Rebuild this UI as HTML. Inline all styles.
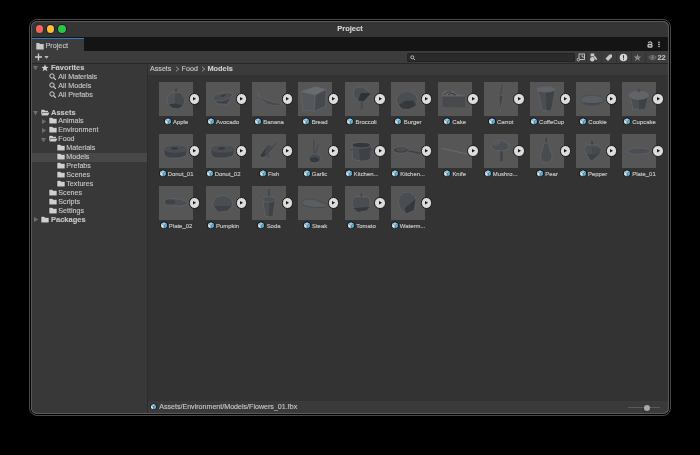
<!DOCTYPE html><html><head><meta charset="utf-8"><style>
*{margin:0;padding:0;box-sizing:border-box}
html,body{-webkit-font-smoothing:antialiased;width:700px;height:455px;background:#000;overflow:hidden;font-family:"Liberation Sans",sans-serif}
.a{position:absolute}
#outer{left:29px;top:19px;width:642px;height:397px;border:1px solid #4a4a4a;border-radius:8px}
#win{left:31px;top:21px;width:638px;height:393px;background:#383838;border-radius:6px;overflow:hidden;will-change:transform}
#hl{left:31px;top:21px;width:638px;height:393px;border-radius:6px;box-shadow:inset 0 0 0 1px #5a5a5a}
.t{white-space:nowrap;color:#c8c8c8;font-size:7.1px;line-height:9px;-webkit-text-stroke:0.12px currentColor}
.b{font-weight:bold}
.th{width:34px;height:34px;background:#565656}
.pb{border-radius:50%;background:#dcdcdc;border:1.2px solid #141414}
.lb{font-size:5.95px;line-height:8px;color:#c8c8c8;-webkit-text-stroke:0.15px #c8c8c8;white-space:nowrap;text-align:center}
svg{position:absolute;overflow:visible}
</style></head><body>
<div class="a" id="outer"></div>
<div class="a" id="win">
<div class="a" style="left:0.00px;top:0.00px;width:638.00px;height:16.00px;background:#353535"></div>
<div class="a" style="left:0.00px;top:16.00px;width:638.00px;height:14.00px;background:#141414"></div>
<div class="a" style="left:4.70px;top:4.30px;width:7.60px;height:7.60px;background:#fe5f57;border-radius:50%;box-shadow:0 0 0 0.9px #0d3a36"></div>
<div class="a" style="left:15.80px;top:4.30px;width:7.60px;height:7.60px;background:#febc2e;border-radius:50%;box-shadow:0 0 0 0.9px #0a1640"></div>
<div class="a" style="left:27.00px;top:4.30px;width:7.60px;height:7.60px;background:#28c840;border-radius:50%;box-shadow:0 0 0 0.9px #2a0f30"></div>
<div class="a t b" style="left:269.00px;top:3.00px;color:#d8d8d8;font-size:7.5px;line-height:10px;width:100px;text-align:center">Project</div>
<div class="a" style="left:0.00px;top:17.00px;width:53.00px;height:13.00px;background:#3c3c3c;border-top:1.5px solid #3a79bb"></div>
<svg style="left:5.00px;top:20.50px" width="9" height="8" viewBox="0 0 9 8" ><path d="M0.3 1h2.8l0.9 1.1h3.7v5.3h-7.4z" fill="#c8c8c8"/></svg>
<div class="a t" style="left:14.40px;top:19.80px;color:#c4c4c4;font-size:7.3px;line-height:10px">Project</div>
<svg style="left:615.00px;top:19.00px" width="8" height="9" viewBox="0 0 8 9" ><path d="M2.1 3.2 Q2.6 1.7 4.2 1.7 Q5.9 1.8 6 4" stroke="#c4c4c4" stroke-width="1.1" fill="none"/><rect x="1.3" y="3.8" width="5.4" height="4" rx="1.9" fill="#c4c4c4"/><rect x="2.8" y="5.3" width="2.4" height="1" fill="#141414"/></svg>
<svg style="left:626.00px;top:19.00px" width="4" height="9" viewBox="0 0 4 9" ><circle cx="2" cy="2.2" r="0.8" fill="#d0d0d0"/><circle cx="2" cy="4.4" r="0.8" fill="#d0d0d0"/><circle cx="2" cy="6.5" r="0.8" fill="#d0d0d0"/></svg>
<div class="a" style="left:0.00px;top:30.00px;width:638.00px;height:12.00px;background:#3c3c3c"></div>
<div class="a" style="left:0.00px;top:42.00px;width:638.00px;height:1.00px;background:#282828"></div>
<svg style="left:3.00px;top:31.00px" width="14" height="10" viewBox="0 0 14 10" ><path d="M4.5 1.5v7M1 5h7" stroke="#d0d0d0" stroke-width="1.3"/><path d="M10.3 4h4.4l-2.2 2.8z" fill="#c0c0c0"/></svg>
<div class="a" style="left:376.00px;top:32.00px;width:168.00px;height:8.50px;background:#2a2a2a;border-radius:2px;border:0.5px solid #222"></div>
<svg style="left:378.50px;top:34.00px" width="6" height="6" viewBox="0 0 6 6" ><circle cx="2.3" cy="2.3" r="1.5" stroke="#c0c0c0" stroke-width="0.9" fill="none"/><path d="M3.4 3.4l1.6 1.6" stroke="#c0c0c0" stroke-width="1"/></svg>
<div class="a" style="left:555.00px;top:31.00px;width:0.70px;height:11.00px;background:#333"></div>
<div class="a" style="left:570.30px;top:31.00px;width:0.70px;height:11.00px;background:#333"></div>
<div class="a" style="left:584.80px;top:31.00px;width:0.70px;height:11.00px;background:#333"></div>
<div class="a" style="left:599.50px;top:31.00px;width:0.70px;height:11.00px;background:#333"></div>
<div class="a" style="left:614.00px;top:31.00px;width:0.70px;height:11.00px;background:#333"></div>
<svg style="left:545.00px;top:32.00px" width="10" height="9" viewBox="0 0 10 9" ><rect x="3" y="1" width="5.5" height="5.5" stroke="#c8c8c8" stroke-width="0.9" fill="none"/><circle cx="2.4" cy="6.6" r="1.3" stroke="#c8c8c8" stroke-width="0.9" fill="#3c3c3c"/><path d="M5 3h2v2" stroke="#c8c8c8" stroke-width="0.8" fill="none"/></svg>
<svg style="left:558.00px;top:31.50px" width="10" height="9" viewBox="0 0 10 9" ><circle cx="3.3" cy="6.2" r="2.2" fill="#c8c8c8"/><rect x="1.6" y="0.5" width="3.7" height="2.9" fill="#c8c8c8"/><path d="M5.8 2.8l2.6 3.4-1.5 0.7-2.4-3z" fill="#c8c8c8"/></svg>
<svg style="left:573.00px;top:32.00px" width="10" height="9" viewBox="0 0 10 9" ><path d="M1.5 5.5l4-4h2.5v2.5l-4 4z" fill="#c8c8c8"/></svg>
<svg style="left:587.50px;top:31.50px" width="10" height="10" viewBox="0 0 10 10" ><circle cx="4.5" cy="4.5" r="3.8" fill="#d4d4d4"/><rect x="4" y="2.2" width="1" height="3" fill="#333"/><rect x="4" y="5.8" width="1" height="1" fill="#333"/></svg>
<svg style="left:602.00px;top:32.00px" width="9" height="9" viewBox="0 0 9 9" ><path d="M4.5 0.8l1 2.6 2.8 0.1-2.2 1.7 0.8 2.7-2.4-1.6-2.4 1.6 0.8-2.7-2.2-1.7 2.8-0.1z" fill="#8a8a8a"/></svg>
<svg style="left:617.00px;top:33.00px" width="10" height="7" viewBox="0 0 10 7" ><path d="M0.8 3.5 Q4.5 -0.5 8.2 3.5 Q4.5 7.5 0.8 3.5z" stroke="#8a8a8a" stroke-width="0.8" fill="none"/><circle cx="4.5" cy="3.5" r="1.3" fill="#8a8a8a"/></svg>
<div class="a t" style="left:626.50px;top:32.00px;color:#c0c0c0;font-size:7.3px;line-height:9px;font-weight:bold">22</div>
<div class="a" style="left:0.00px;top:43.00px;width:116.00px;height:350.00px;background:#383838"></div>
<div class="a" style="left:116.00px;top:43.00px;width:1.00px;height:350.00px;background:#2c2c2c"></div>
<div class="a" style="left:0.00px;top:132.00px;width:116.00px;height:9.00px;background:#484848"></div>
<svg style="left:2.40px;top:45.20px" width="5.2" height="5" viewBox="0 0 5.2 5" ><path d="M0 0h5l-2.5 4.2z" fill="#6e6e6e"/></svg>
<svg style="left:10.20px;top:42.90px" width="9" height="8" viewBox="0 0 9 8" ><path d="M4 0.3l1 2.5 2.7 0.1-2.1 1.7 0.8 2.6-2.4-1.5-2.4 1.5 0.8-2.6-2.1-1.7 2.7-0.1z" fill="#d0d0d0"/></svg>
<div class="a t b" style="left:20.00px;top:42.00px;font-size:7.5px">Favorites</div>
<svg style="left:18.00px;top:51.83px" width="9" height="8" viewBox="0 0 9 8" ><circle cx="3" cy="3" r="2.2" stroke="#d0d0d0" stroke-width="1" fill="none"/><path d="M4.6 4.6l2.3 2.3" stroke="#d0d0d0" stroke-width="1.2"/></svg>
<div class="a t" style="left:27.30px;top:51.73px;font-size:7.15px">All Materials</div>
<svg style="left:18.00px;top:60.76px" width="9" height="8" viewBox="0 0 9 8" ><circle cx="3" cy="3" r="2.2" stroke="#d0d0d0" stroke-width="1" fill="none"/><path d="M4.6 4.6l2.3 2.3" stroke="#d0d0d0" stroke-width="1.2"/></svg>
<div class="a t" style="left:27.30px;top:60.66px;font-size:7.15px">All Models</div>
<svg style="left:18.00px;top:69.69px" width="9" height="8" viewBox="0 0 9 8" ><circle cx="3" cy="3" r="2.2" stroke="#d0d0d0" stroke-width="1" fill="none"/><path d="M4.6 4.6l2.3 2.3" stroke="#d0d0d0" stroke-width="1.2"/></svg>
<div class="a t" style="left:27.30px;top:69.59px;font-size:7.15px">All Prefabs</div>
<svg style="left:2.40px;top:89.85px" width="5.2" height="5" viewBox="0 0 5.2 5" ><path d="M0 0h5l-2.5 4.2z" fill="#6e6e6e"/></svg>
<svg style="left:10.00px;top:87.55px" width="9" height="8" viewBox="0 0 9 8" ><path d="M0.3 0.8h3l0.8 1h3v1.2h-5.5l-1.5 3.4z M1.8 3.5h6.8l-1.6 3h-6.6z" fill="#d0d0d0" stroke="#1e1e1e" stroke-width="0.6" paint-order="stroke"/></svg>
<div class="a t b" style="left:20.00px;top:86.65px;font-size:7.5px">Assets</div>
<svg style="left:11.00px;top:97.68px" width="5" height="5.4" viewBox="0 0 5 5.4" ><path d="M0 0v5l4.2-2.5z" fill="#6e6e6e"/></svg>
<svg style="left:18.00px;top:96.48px" width="9" height="8" viewBox="0 0 9 8" ><path d="M0.3 0.8h3l0.8 1h3.6v4.6h-7.4z" fill="#d0d0d0" stroke="#1e1e1e" stroke-width="0.6" paint-order="stroke"/></svg>
<div class="a t" style="left:27.30px;top:96.38px;font-size:7.15px">Animals</div>
<svg style="left:11.00px;top:106.61px" width="5" height="5.4" viewBox="0 0 5 5.4" ><path d="M0 0v5l4.2-2.5z" fill="#6e6e6e"/></svg>
<svg style="left:18.00px;top:105.41px" width="9" height="8" viewBox="0 0 9 8" ><path d="M0.3 0.8h3l0.8 1h3.6v4.6h-7.4z" fill="#d0d0d0" stroke="#1e1e1e" stroke-width="0.6" paint-order="stroke"/></svg>
<div class="a t" style="left:27.30px;top:105.31px;font-size:7.15px">Environment</div>
<svg style="left:10.40px;top:116.64px" width="5.2" height="5" viewBox="0 0 5.2 5" ><path d="M0 0h5l-2.5 4.2z" fill="#6e6e6e"/></svg>
<svg style="left:18.00px;top:114.34px" width="9" height="8" viewBox="0 0 9 8" ><path d="M0.3 0.8h3l0.8 1h3v1.2h-5.5l-1.5 3.4z M1.8 3.5h6.8l-1.6 3h-6.6z" fill="#d0d0d0" stroke="#1e1e1e" stroke-width="0.6" paint-order="stroke"/></svg>
<div class="a t" style="left:27.30px;top:114.24px;font-size:7.15px">Food</div>
<svg style="left:26.00px;top:123.27px" width="9" height="8" viewBox="0 0 9 8" ><path d="M0.3 0.8h3l0.8 1h3.6v4.6h-7.4z" fill="#d0d0d0" stroke="#1e1e1e" stroke-width="0.6" paint-order="stroke"/></svg>
<div class="a t" style="left:35.30px;top:123.17px;font-size:7.15px">Materials</div>
<svg style="left:26.00px;top:132.20px" width="9" height="8" viewBox="0 0 9 8" ><path d="M0.3 0.8h3l0.8 1h3.6v4.6h-7.4z" fill="#d0d0d0" stroke="#1e1e1e" stroke-width="0.6" paint-order="stroke"/></svg>
<div class="a t" style="left:35.30px;top:132.10px;font-size:7.15px">Models</div>
<svg style="left:26.00px;top:141.13px" width="9" height="8" viewBox="0 0 9 8" ><path d="M0.3 0.8h3l0.8 1h3.6v4.6h-7.4z" fill="#d0d0d0" stroke="#1e1e1e" stroke-width="0.6" paint-order="stroke"/></svg>
<div class="a t" style="left:35.30px;top:141.03px;font-size:7.15px">Prefabs</div>
<svg style="left:26.00px;top:150.06px" width="9" height="8" viewBox="0 0 9 8" ><path d="M0.3 0.8h3l0.8 1h3.6v4.6h-7.4z" fill="#d0d0d0" stroke="#1e1e1e" stroke-width="0.6" paint-order="stroke"/></svg>
<div class="a t" style="left:35.30px;top:149.96px;font-size:7.15px">Scenes</div>
<svg style="left:26.00px;top:158.99px" width="9" height="8" viewBox="0 0 9 8" ><path d="M0.3 0.8h3l0.8 1h3.6v4.6h-7.4z" fill="#d0d0d0" stroke="#1e1e1e" stroke-width="0.6" paint-order="stroke"/></svg>
<div class="a t" style="left:35.30px;top:158.89px;font-size:7.15px">Textures</div>
<svg style="left:18.00px;top:167.92px" width="9" height="8" viewBox="0 0 9 8" ><path d="M0.3 0.8h3l0.8 1h3.6v4.6h-7.4z" fill="#d0d0d0" stroke="#1e1e1e" stroke-width="0.6" paint-order="stroke"/></svg>
<div class="a t" style="left:27.30px;top:167.82px;font-size:7.15px">Scenes</div>
<svg style="left:18.00px;top:176.85px" width="9" height="8" viewBox="0 0 9 8" ><path d="M0.3 0.8h3l0.8 1h3.6v4.6h-7.4z" fill="#d0d0d0" stroke="#1e1e1e" stroke-width="0.6" paint-order="stroke"/></svg>
<div class="a t" style="left:27.30px;top:176.75px;font-size:7.15px">Scripts</div>
<svg style="left:18.00px;top:185.78px" width="9" height="8" viewBox="0 0 9 8" ><path d="M0.3 0.8h3l0.8 1h3.6v4.6h-7.4z" fill="#d0d0d0" stroke="#1e1e1e" stroke-width="0.6" paint-order="stroke"/></svg>
<div class="a t" style="left:27.30px;top:185.68px;font-size:7.15px">Settings</div>
<svg style="left:3.00px;top:195.91px" width="5" height="5.4" viewBox="0 0 5 5.4" ><path d="M0 0v5l4.2-2.5z" fill="#6e6e6e"/></svg>
<svg style="left:10.00px;top:194.71px" width="9" height="8" viewBox="0 0 9 8" ><path d="M0.3 0.8h3l0.8 1h3.6v4.6h-7.4z" fill="#d0d0d0" stroke="#1e1e1e" stroke-width="0.6" paint-order="stroke"/></svg>
<div class="a t b" style="left:20.00px;top:193.81px;font-size:7.5px">Packages</div>
<div class="a" style="left:117.00px;top:43.00px;width:520.00px;height:11.00px;background:#3b3b3b"></div>
<div class="a t" style="left:119.00px;top:43.40px;font-size:7.15px;line-height:10px">Assets</div>
<svg style="left:143.50px;top:44.80px" width="5" height="6" viewBox="0 0 5 6" ><path d="M1 0.8 L3.8 3 L1 5.2" stroke="#a0a0a0" stroke-width="0.9" fill="none"/></svg>
<div class="a t" style="left:150.60px;top:43.40px;font-size:7.15px;line-height:10px">Food</div>
<svg style="left:169.50px;top:44.80px" width="5" height="6" viewBox="0 0 5 6" ><path d="M1 0.8 L3.8 3 L1 5.2" stroke="#a0a0a0" stroke-width="0.9" fill="none"/></svg>
<div class="a t b" style="left:176.40px;top:43.40px;font-size:7.4px;line-height:10px;color:#cdcdcd">Models</div>
<div class="a" style="left:117.00px;top:54.00px;width:520.00px;height:326.00px;background:#333333"></div>
<div class="a th" style="left:128.00px;top:60.80px;width:34.00px;height:34.00px;"></div>
<svg style="left:128.00px;top:60.80px" width="34" height="34" viewBox="0 0 34 34" ><rect x="16.3" y="6.5" width="1.5" height="5.5" fill="#3e4145"/><polygon points="8.9,14.3 12.3,10.9 16.4,10.2 21.1,10.9 24.5,15.6 25.2,19.7 23.8,23.8 19.1,26.5 13.6,25.8 9.6,22.4 7.9,18.4" fill="#4f5256" stroke="#66696d" stroke-width="0.6" stroke-linejoin="round"/><polygon points="16.4,10.9 21.1,10.9 24.5,15.6 25.2,19.7 23.8,23.8 16,22" fill="#45484c"/><polygon points="9.6,22.4 16,21.5 23.8,23.8 19.1,26.5 13.6,25.8" fill="#35383c"/></svg>
<div class="a pb" style="left:157.70px;top:72.20px;width:11.60px;height:11.60px;"></div>
<svg style="left:162.20px;top:76.20px" width="4" height="4" viewBox="0 0 4 4" ><path d="M0 0 L3.1 1.8 L0 3.6Z" fill="#1a1a1a"/></svg>
<div class="a lb" style="left:118.00px;top:95.80px;width:54px"><svg style="position:relative;display:inline-block;vertical-align:-2px;margin-right:1.2px" width="8" height="8.6" viewBox="0 0 7 7.5"><path d="M3.5 0.3 L6.7 2 L6.7 5.5 L3.5 7.2 L0.3 5.5 L0.3 2Z" fill="#141414"/><path d="M3.5 1 L6 2.3 L3.5 3.6 L1 2.3Z" fill="#8fd0f0"/><path d="M1 2.5 L3.3 3.8 L3.3 6.5 L1 5.2Z" fill="#e6e6e6"/><path d="M3.7 3.8 L6 2.5 L6 5.2 L3.7 6.5Z" fill="#5ab8ea"/></svg>Apple</div>
<div class="a th" style="left:175.00px;top:60.80px;width:34.00px;height:34.00px;"></div>
<svg style="left:175.00px;top:60.80px" width="34" height="34" viewBox="0 0 34 34" ><polygon points="6.5,16.5 26.7,13 21.2,22.3 12,21.8" fill="#3e4145" stroke="#66696d" stroke-width="0.6" stroke-linejoin="round"/><ellipse cx="16.4" cy="14.6" rx="10.4" ry="3.8" fill="#4a4d51" stroke="#66696d" stroke-width="0.6" transform="rotate(-12 16.4 14.6)"/><ellipse cx="17.2" cy="13.7" rx="3.3" ry="1.6" fill="#35383c" stroke="#606367" stroke-width="0.6" transform="rotate(-12 17.2 13.7)"/></svg>
<div class="a pb" style="left:204.70px;top:72.20px;width:11.60px;height:11.60px;"></div>
<svg style="left:209.20px;top:76.20px" width="4" height="4" viewBox="0 0 4 4" ><path d="M0 0 L3.1 1.8 L0 3.6Z" fill="#1a1a1a"/></svg>
<div class="a lb" style="left:165.00px;top:95.80px;width:54px"><svg style="position:relative;display:inline-block;vertical-align:-2px;margin-right:1.2px" width="8" height="8.6" viewBox="0 0 7 7.5"><path d="M3.5 0.3 L6.7 2 L6.7 5.5 L3.5 7.2 L0.3 5.5 L0.3 2Z" fill="#141414"/><path d="M3.5 1 L6 2.3 L3.5 3.6 L1 2.3Z" fill="#8fd0f0"/><path d="M1 2.5 L3.3 3.8 L3.3 6.5 L1 5.2Z" fill="#e6e6e6"/><path d="M3.7 3.8 L6 2.5 L6 5.2 L3.7 6.5Z" fill="#5ab8ea"/></svg>Avocado</div>
<div class="a th" style="left:221.00px;top:60.80px;width:34.00px;height:34.00px;"></div>
<svg style="left:221.00px;top:60.80px" width="34" height="34" viewBox="0 0 34 34" ><path d="M5.3 9.7 Q7.5 19 30.2 21.8 Q27 24.3 21 23.6 Q9 21.5 5.3 9.7Z" fill="#46494d" stroke="#606367" stroke-width="0.7"/></svg>
<div class="a pb" style="left:250.70px;top:72.20px;width:11.60px;height:11.60px;"></div>
<svg style="left:255.20px;top:76.20px" width="4" height="4" viewBox="0 0 4 4" ><path d="M0 0 L3.1 1.8 L0 3.6Z" fill="#1a1a1a"/></svg>
<div class="a lb" style="left:211.00px;top:95.80px;width:54px"><svg style="position:relative;display:inline-block;vertical-align:-2px;margin-right:1.2px" width="8" height="8.6" viewBox="0 0 7 7.5"><path d="M3.5 0.3 L6.7 2 L6.7 5.5 L3.5 7.2 L0.3 5.5 L0.3 2Z" fill="#141414"/><path d="M3.5 1 L6 2.3 L3.5 3.6 L1 2.3Z" fill="#8fd0f0"/><path d="M1 2.5 L3.3 3.8 L3.3 6.5 L1 5.2Z" fill="#e6e6e6"/><path d="M3.7 3.8 L6 2.5 L6 5.2 L3.7 6.5Z" fill="#5ab8ea"/></svg>Banana</div>
<div class="a th" style="left:267.00px;top:60.80px;width:34.00px;height:34.00px;"></div>
<svg style="left:267.00px;top:60.80px" width="34" height="34" viewBox="0 0 34 34" ><polygon points="3.1,9.5 17.3,4.8 28.2,7.5 17.3,12.9" fill="#686b6f" stroke="#66696d" stroke-width="0.6" stroke-linejoin="round"/><polygon points="3.1,9.5 17.3,12.9 16,29.2 5,28.5" fill="#54575b" stroke="#66696d" stroke-width="0.6" stroke-linejoin="round"/><polygon points="17.3,12.9 28.2,7.5 27.5,24.5 16,29.2" fill="#46494d" stroke="#66696d" stroke-width="0.6" stroke-linejoin="round"/></svg>
<div class="a pb" style="left:296.70px;top:72.20px;width:11.60px;height:11.60px;"></div>
<svg style="left:301.20px;top:76.20px" width="4" height="4" viewBox="0 0 4 4" ><path d="M0 0 L3.1 1.8 L0 3.6Z" fill="#1a1a1a"/></svg>
<div class="a lb" style="left:257.00px;top:95.80px;width:54px"><svg style="position:relative;display:inline-block;vertical-align:-2px;margin-right:1.2px" width="8" height="8.6" viewBox="0 0 7 7.5"><path d="M3.5 0.3 L6.7 2 L6.7 5.5 L3.5 7.2 L0.3 5.5 L0.3 2Z" fill="#141414"/><path d="M3.5 1 L6 2.3 L3.5 3.6 L1 2.3Z" fill="#8fd0f0"/><path d="M1 2.5 L3.3 3.8 L3.3 6.5 L1 5.2Z" fill="#e6e6e6"/><path d="M3.7 3.8 L6 2.5 L6 5.2 L3.7 6.5Z" fill="#5ab8ea"/></svg>Bread</div>
<div class="a th" style="left:313.50px;top:60.80px;width:34.00px;height:34.00px;"></div>
<svg style="left:313.50px;top:60.80px" width="34" height="34" viewBox="0 0 34 34" ><path d="M17 19 L16.5 26.7" stroke="#46494d" stroke-width="1.8" stroke-linecap="round"/><polygon points="8.5,9.3 10.9,5.3 18,4.9 25.9,11.3 18.8,19.2 12.8,18.4 8.5,14" fill="#4a4d51" stroke="#66696d" stroke-width="0.6" stroke-linejoin="round"/><polygon points="16,10.9 25.9,11.3 18.8,19.2 13.2,18.4" fill="#2f3235"/></svg>
<div class="a pb" style="left:343.20px;top:72.20px;width:11.60px;height:11.60px;"></div>
<svg style="left:347.70px;top:76.20px" width="4" height="4" viewBox="0 0 4 4" ><path d="M0 0 L3.1 1.8 L0 3.6Z" fill="#1a1a1a"/></svg>
<div class="a lb" style="left:303.50px;top:95.80px;width:54px"><svg style="position:relative;display:inline-block;vertical-align:-2px;margin-right:1.2px" width="8" height="8.6" viewBox="0 0 7 7.5"><path d="M3.5 0.3 L6.7 2 L6.7 5.5 L3.5 7.2 L0.3 5.5 L0.3 2Z" fill="#141414"/><path d="M3.5 1 L6 2.3 L3.5 3.6 L1 2.3Z" fill="#8fd0f0"/><path d="M1 2.5 L3.3 3.8 L3.3 6.5 L1 5.2Z" fill="#e6e6e6"/><path d="M3.7 3.8 L6 2.5 L6 5.2 L3.7 6.5Z" fill="#5ab8ea"/></svg>Broccoli</div>
<div class="a th" style="left:360.00px;top:60.80px;width:34.00px;height:34.00px;"></div>
<svg style="left:360.00px;top:60.80px" width="34" height="34" viewBox="0 0 34 34" ><polygon points="5.3,18 7.5,13 13,10.3 20,10.1 25,13 26.7,18 25,23.5 18,27.1 11,26.6 6.5,23" fill="#4a4d51" stroke="#66696d" stroke-width="0.6" stroke-linejoin="round"/><polygon points="8,23 14,19 22,18.5 25,23.5 18,27.1 11,26.6" fill="#35383c"/><polygon points="7.5,13 13,10.3 20,10.1 15,15" fill="#4a4d51"/></svg>
<div class="a pb" style="left:389.70px;top:72.20px;width:11.60px;height:11.60px;"></div>
<svg style="left:394.20px;top:76.20px" width="4" height="4" viewBox="0 0 4 4" ><path d="M0 0 L3.1 1.8 L0 3.6Z" fill="#1a1a1a"/></svg>
<div class="a lb" style="left:350.00px;top:95.80px;width:54px"><svg style="position:relative;display:inline-block;vertical-align:-2px;margin-right:1.2px" width="8" height="8.6" viewBox="0 0 7 7.5"><path d="M3.5 0.3 L6.7 2 L6.7 5.5 L3.5 7.2 L0.3 5.5 L0.3 2Z" fill="#141414"/><path d="M3.5 1 L6 2.3 L3.5 3.6 L1 2.3Z" fill="#8fd0f0"/><path d="M1 2.5 L3.3 3.8 L3.3 6.5 L1 5.2Z" fill="#e6e6e6"/><path d="M3.7 3.8 L6 2.5 L6 5.2 L3.7 6.5Z" fill="#5ab8ea"/></svg>Burger</div>
<div class="a th" style="left:406.60px;top:60.80px;width:34.00px;height:34.00px;"></div>
<svg style="left:406.60px;top:60.80px" width="34" height="34" viewBox="0 0 34 34" ><polygon points="4.5,14.4 5,10.5 7,9.3 14.8,8.9 18,12 27.1,14.4" fill="#606367" stroke="#66696d" stroke-width="0.6" stroke-linejoin="round"/><path d="M6 13 Q8 9.5 13 9.8 M10 13 Q12 10.5 16 11.5 M15 12.5 L18 13" stroke="#35383b" stroke-width="0.9" fill="none"/><polygon points="4.5,14.4 27.1,14.4 27.1,25.4 4.5,24.8" fill="#47494c"/></svg>
<div class="a pb" style="left:436.30px;top:72.20px;width:11.60px;height:11.60px;"></div>
<svg style="left:440.80px;top:76.20px" width="4" height="4" viewBox="0 0 4 4" ><path d="M0 0 L3.1 1.8 L0 3.6Z" fill="#1a1a1a"/></svg>
<div class="a lb" style="left:396.60px;top:95.80px;width:54px"><svg style="position:relative;display:inline-block;vertical-align:-2px;margin-right:1.2px" width="8" height="8.6" viewBox="0 0 7 7.5"><path d="M3.5 0.3 L6.7 2 L6.7 5.5 L3.5 7.2 L0.3 5.5 L0.3 2Z" fill="#141414"/><path d="M3.5 1 L6 2.3 L3.5 3.6 L1 2.3Z" fill="#8fd0f0"/><path d="M1 2.5 L3.3 3.8 L3.3 6.5 L1 5.2Z" fill="#e6e6e6"/><path d="M3.7 3.8 L6 2.5 L6 5.2 L3.7 6.5Z" fill="#5ab8ea"/></svg>Cake</div>
<div class="a th" style="left:452.60px;top:60.80px;width:34.00px;height:34.00px;"></div>
<svg style="left:452.60px;top:60.80px" width="34" height="34" viewBox="0 0 34 34" ><path d="M18 2.2 L16.8 13.3" stroke="#3e4145" stroke-width="0.8" stroke-linecap="round"/><polygon points="14.8,13.6 19.2,13.6 16.4,29.5" fill="#3e4145" stroke="#66696d" stroke-width="0.6" stroke-linejoin="round"/><polygon points="14.8,13.6 16.5,13.6 16.4,29.5" fill="#4a4d51"/></svg>
<div class="a pb" style="left:482.30px;top:72.20px;width:11.60px;height:11.60px;"></div>
<svg style="left:486.80px;top:76.20px" width="4" height="4" viewBox="0 0 4 4" ><path d="M0 0 L3.1 1.8 L0 3.6Z" fill="#1a1a1a"/></svg>
<div class="a lb" style="left:442.60px;top:95.80px;width:54px"><svg style="position:relative;display:inline-block;vertical-align:-2px;margin-right:1.2px" width="8" height="8.6" viewBox="0 0 7 7.5"><path d="M3.5 0.3 L6.7 2 L6.7 5.5 L3.5 7.2 L0.3 5.5 L0.3 2Z" fill="#141414"/><path d="M3.5 1 L6 2.3 L3.5 3.6 L1 2.3Z" fill="#8fd0f0"/><path d="M1 2.5 L3.3 3.8 L3.3 6.5 L1 5.2Z" fill="#e6e6e6"/><path d="M3.7 3.8 L6 2.5 L6 5.2 L3.7 6.5Z" fill="#5ab8ea"/></svg>Carrot</div>
<div class="a th" style="left:499.00px;top:60.80px;width:34.00px;height:34.00px;"></div>
<svg style="left:499.00px;top:60.80px" width="34" height="34" viewBox="0 0 34 34" ><polygon points="8,9 24.5,9 21,28.5 12.3,28.5" fill="#4a4d51" stroke="#66696d" stroke-width="0.6" stroke-linejoin="round"/><polygon points="16,9 24.5,9 21,28.5 16.5,28.5" fill="#3e4145"/><ellipse cx="16.1" cy="7.5" rx="9" ry="2.6" fill="#606367" stroke="#66696d" stroke-width="0.6"/></svg>
<div class="a pb" style="left:528.70px;top:72.20px;width:11.60px;height:11.60px;"></div>
<svg style="left:533.20px;top:76.20px" width="4" height="4" viewBox="0 0 4 4" ><path d="M0 0 L3.1 1.8 L0 3.6Z" fill="#1a1a1a"/></svg>
<div class="a lb" style="left:489.00px;top:95.80px;width:54px"><svg style="position:relative;display:inline-block;vertical-align:-2px;margin-right:1.2px" width="8" height="8.6" viewBox="0 0 7 7.5"><path d="M3.5 0.3 L6.7 2 L6.7 5.5 L3.5 7.2 L0.3 5.5 L0.3 2Z" fill="#141414"/><path d="M3.5 1 L6 2.3 L3.5 3.6 L1 2.3Z" fill="#8fd0f0"/><path d="M1 2.5 L3.3 3.8 L3.3 6.5 L1 5.2Z" fill="#e6e6e6"/><path d="M3.7 3.8 L6 2.5 L6 5.2 L3.7 6.5Z" fill="#5ab8ea"/></svg>CoffeCup</div>
<div class="a th" style="left:545.00px;top:60.80px;width:34.00px;height:34.00px;"></div>
<svg style="left:545.00px;top:60.80px" width="34" height="34" viewBox="0 0 34 34" ><path d="M4.1 18 C6 14 11 13.2 16 13.2 C21 13.2 26 14.5 27.9 18 C27 21 22 23 16 23.1 C10 23 5 21 4.1 18Z" fill="#5a5d61" stroke="#46494d" stroke-width="0.7"/><path d="M6 19.5 C10 21.5 22 21.5 26.5 19.5 C24 22 20 23 16 23 C12 23 8 22 6 19.5Z" fill="#44474b"/></svg>
<div class="a pb" style="left:574.70px;top:72.20px;width:11.60px;height:11.60px;"></div>
<svg style="left:579.20px;top:76.20px" width="4" height="4" viewBox="0 0 4 4" ><path d="M0 0 L3.1 1.8 L0 3.6Z" fill="#1a1a1a"/></svg>
<div class="a lb" style="left:535.00px;top:95.80px;width:54px"><svg style="position:relative;display:inline-block;vertical-align:-2px;margin-right:1.2px" width="8" height="8.6" viewBox="0 0 7 7.5"><path d="M3.5 0.3 L6.7 2 L6.7 5.5 L3.5 7.2 L0.3 5.5 L0.3 2Z" fill="#141414"/><path d="M3.5 1 L6 2.3 L3.5 3.6 L1 2.3Z" fill="#8fd0f0"/><path d="M1 2.5 L3.3 3.8 L3.3 6.5 L1 5.2Z" fill="#e6e6e6"/><path d="M3.7 3.8 L6 2.5 L6 5.2 L3.7 6.5Z" fill="#5ab8ea"/></svg>Cookie</div>
<div class="a th" style="left:591.40px;top:60.80px;width:34.00px;height:34.00px;"></div>
<svg style="left:591.40px;top:60.80px" width="34" height="34" viewBox="0 0 34 34" ><polygon points="8,14 26,14 22.8,27.2 11.2,27.2" fill="#4a4d51" stroke="#66696d" stroke-width="0.6" stroke-linejoin="round"/><polygon points="17,14 26,14 22.8,27.2 17,27.2" fill="#3e4145"/><ellipse cx="16.9" cy="13.2" rx="9.8" ry="4.2" fill="#606367" stroke="#66696d" stroke-width="0.6"/><ellipse cx="16.7" cy="8.2" rx="1.9" ry="1.7" fill="#4a4d51"/></svg>
<div class="a pb" style="left:621.10px;top:72.20px;width:11.60px;height:11.60px;"></div>
<svg style="left:625.60px;top:76.20px" width="4" height="4" viewBox="0 0 4 4" ><path d="M0 0 L3.1 1.8 L0 3.6Z" fill="#1a1a1a"/></svg>
<div class="a lb" style="left:581.40px;top:95.80px;width:54px"><svg style="position:relative;display:inline-block;vertical-align:-2px;margin-right:1.2px" width="8" height="8.6" viewBox="0 0 7 7.5"><path d="M3.5 0.3 L6.7 2 L6.7 5.5 L3.5 7.2 L0.3 5.5 L0.3 2Z" fill="#141414"/><path d="M3.5 1 L6 2.3 L3.5 3.6 L1 2.3Z" fill="#8fd0f0"/><path d="M1 2.5 L3.3 3.8 L3.3 6.5 L1 5.2Z" fill="#e6e6e6"/><path d="M3.7 3.8 L6 2.5 L6 5.2 L3.7 6.5Z" fill="#5ab8ea"/></svg>Cupcake</div>
<div class="a th" style="left:128.00px;top:112.80px;width:34.00px;height:34.00px;"></div>
<svg style="left:128.00px;top:112.80px" width="34" height="34" viewBox="0 0 34 34" ><polygon points="4.8,15 8,11.8 25,11.8 29,15 27,22 20,24 9,24 5,21" fill="#3e4145" stroke="#66696d" stroke-width="0.6" stroke-linejoin="round"/><ellipse cx="16.8" cy="15.2" rx="12" ry="3.6" fill="#4a4d51"/><ellipse cx="15.5" cy="14.5" rx="3.5" ry="1.2" fill="#35383c"/></svg>
<div class="a pb" style="left:157.70px;top:124.20px;width:11.60px;height:11.60px;"></div>
<svg style="left:162.20px;top:128.20px" width="4" height="4" viewBox="0 0 4 4" ><path d="M0 0 L3.1 1.8 L0 3.6Z" fill="#1a1a1a"/></svg>
<div class="a lb" style="left:118.00px;top:147.80px;width:54px"><svg style="position:relative;display:inline-block;vertical-align:-2px;margin-right:1.2px" width="8" height="8.6" viewBox="0 0 7 7.5"><path d="M3.5 0.3 L6.7 2 L6.7 5.5 L3.5 7.2 L0.3 5.5 L0.3 2Z" fill="#141414"/><path d="M3.5 1 L6 2.3 L3.5 3.6 L1 2.3Z" fill="#8fd0f0"/><path d="M1 2.5 L3.3 3.8 L3.3 6.5 L1 5.2Z" fill="#e6e6e6"/><path d="M3.7 3.8 L6 2.5 L6 5.2 L3.7 6.5Z" fill="#5ab8ea"/></svg>Donut_01</div>
<div class="a th" style="left:175.00px;top:112.80px;width:34.00px;height:34.00px;"></div>
<svg style="left:175.00px;top:112.80px" width="34" height="34" viewBox="0 0 34 34" ><polygon points="4.8,15 8,11.8 25,11.8 29,15 27,22 20,24 9,24 5,21" fill="#3e4145" stroke="#66696d" stroke-width="0.6" stroke-linejoin="round"/><ellipse cx="16.8" cy="15.2" rx="12" ry="3.6" fill="#4a4d51"/><ellipse cx="15.5" cy="14.5" rx="3.5" ry="1.2" fill="#35383c"/></svg>
<div class="a pb" style="left:204.70px;top:124.20px;width:11.60px;height:11.60px;"></div>
<svg style="left:209.20px;top:128.20px" width="4" height="4" viewBox="0 0 4 4" ><path d="M0 0 L3.1 1.8 L0 3.6Z" fill="#1a1a1a"/></svg>
<div class="a lb" style="left:165.00px;top:147.80px;width:54px"><svg style="position:relative;display:inline-block;vertical-align:-2px;margin-right:1.2px" width="8" height="8.6" viewBox="0 0 7 7.5"><path d="M3.5 0.3 L6.7 2 L6.7 5.5 L3.5 7.2 L0.3 5.5 L0.3 2Z" fill="#141414"/><path d="M3.5 1 L6 2.3 L3.5 3.6 L1 2.3Z" fill="#8fd0f0"/><path d="M1 2.5 L3.3 3.8 L3.3 6.5 L1 5.2Z" fill="#e6e6e6"/><path d="M3.7 3.8 L6 2.5 L6 5.2 L3.7 6.5Z" fill="#5ab8ea"/></svg>Donut_02</div>
<div class="a th" style="left:221.00px;top:112.80px;width:34.00px;height:34.00px;"></div>
<svg style="left:221.00px;top:112.80px" width="34" height="34" viewBox="0 0 34 34" ><polygon points="7.8,21.5 15,11.5 18.5,11.3 20.6,14.5 13.5,22.5 10,23.7" fill="#35383c" stroke="#66696d" stroke-width="0.6" stroke-linejoin="round"/><polygon points="15,11.5 18.5,11.3 20.6,14.5 13.5,22.5 12.5,19" fill="#45484c"/><path d="M20 14 L23.5 9.5" stroke="#35383c" stroke-width="0.7" stroke-linecap="round"/><path d="M15.5 20 L17 23.5" stroke="#35383c" stroke-width="0.7" stroke-linecap="round"/></svg>
<div class="a pb" style="left:250.70px;top:124.20px;width:11.60px;height:11.60px;"></div>
<svg style="left:255.20px;top:128.20px" width="4" height="4" viewBox="0 0 4 4" ><path d="M0 0 L3.1 1.8 L0 3.6Z" fill="#1a1a1a"/></svg>
<div class="a lb" style="left:211.00px;top:147.80px;width:54px"><svg style="position:relative;display:inline-block;vertical-align:-2px;margin-right:1.2px" width="8" height="8.6" viewBox="0 0 7 7.5"><path d="M3.5 0.3 L6.7 2 L6.7 5.5 L3.5 7.2 L0.3 5.5 L0.3 2Z" fill="#141414"/><path d="M3.5 1 L6 2.3 L3.5 3.6 L1 2.3Z" fill="#8fd0f0"/><path d="M1 2.5 L3.3 3.8 L3.3 6.5 L1 5.2Z" fill="#e6e6e6"/><path d="M3.7 3.8 L6 2.5 L6 5.2 L3.7 6.5Z" fill="#5ab8ea"/></svg>Fish</div>
<div class="a th" style="left:267.00px;top:112.80px;width:34.00px;height:34.00px;"></div>
<svg style="left:267.00px;top:112.80px" width="34" height="34" viewBox="0 0 34 34" ><path d="M16.3 21 Q15.5 14 15.8 5.5 M17.2 21 Q18.5 15 20.3 10.5" stroke="#3c3f43" stroke-width="0.8" fill="none"/><ellipse cx="16.7" cy="24.3" rx="6.2" ry="4.6" fill="#484b4f" stroke="#66696d" stroke-width="0.6"/><ellipse cx="16.4" cy="25.8" rx="4.5" ry="2.5" fill="#35383c"/></svg>
<div class="a pb" style="left:296.70px;top:124.20px;width:11.60px;height:11.60px;"></div>
<svg style="left:301.20px;top:128.20px" width="4" height="4" viewBox="0 0 4 4" ><path d="M0 0 L3.1 1.8 L0 3.6Z" fill="#1a1a1a"/></svg>
<div class="a lb" style="left:257.00px;top:147.80px;width:54px"><svg style="position:relative;display:inline-block;vertical-align:-2px;margin-right:1.2px" width="8" height="8.6" viewBox="0 0 7 7.5"><path d="M3.5 0.3 L6.7 2 L6.7 5.5 L3.5 7.2 L0.3 5.5 L0.3 2Z" fill="#141414"/><path d="M3.5 1 L6 2.3 L3.5 3.6 L1 2.3Z" fill="#8fd0f0"/><path d="M1 2.5 L3.3 3.8 L3.3 6.5 L1 5.2Z" fill="#e6e6e6"/><path d="M3.7 3.8 L6 2.5 L6 5.2 L3.7 6.5Z" fill="#5ab8ea"/></svg>Garlic</div>
<div class="a th" style="left:313.50px;top:112.80px;width:34.00px;height:34.00px;"></div>
<svg style="left:313.50px;top:112.80px" width="34" height="34" viewBox="0 0 34 34" ><polygon points="7,11 25.8,11 25,25 20,26.5 12,26.5 7.5,25" fill="#4a4d51" stroke="#66696d" stroke-width="0.6" stroke-linejoin="round"/><polygon points="14,11 25.8,11 25,25 20,26.5 15,26.5" fill="#3e4145"/><ellipse cx="16.4" cy="11.1" rx="9.5" ry="2.9" fill="#35383c" stroke="#6d7074" stroke-width="0.6"/><rect x="5.5" y="15" width="1.8" height="1.2" fill="#3e4145"/><rect x="25.5" y="15" width="1.8" height="1.2" fill="#3e4145"/></svg>
<div class="a pb" style="left:343.20px;top:124.20px;width:11.60px;height:11.60px;"></div>
<svg style="left:347.70px;top:128.20px" width="4" height="4" viewBox="0 0 4 4" ><path d="M0 0 L3.1 1.8 L0 3.6Z" fill="#1a1a1a"/></svg>
<div class="a lb" style="left:303.50px;top:147.80px;width:54px"><svg style="position:relative;display:inline-block;vertical-align:-2px;margin-right:1.2px" width="8" height="8.6" viewBox="0 0 7 7.5"><path d="M3.5 0.3 L6.7 2 L6.7 5.5 L3.5 7.2 L0.3 5.5 L0.3 2Z" fill="#141414"/><path d="M3.5 1 L6 2.3 L3.5 3.6 L1 2.3Z" fill="#8fd0f0"/><path d="M1 2.5 L3.3 3.8 L3.3 6.5 L1 5.2Z" fill="#e6e6e6"/><path d="M3.7 3.8 L6 2.5 L6 5.2 L3.7 6.5Z" fill="#5ab8ea"/></svg>Kitchen...</div>
<div class="a th" style="left:360.00px;top:112.80px;width:34.00px;height:34.00px;"></div>
<svg style="left:360.00px;top:112.80px" width="34" height="34" viewBox="0 0 34 34" ><path d="M16.5 16.6 L29 19.4" stroke="#3c3f43" stroke-width="1.1" stroke-linecap="round"/><ellipse cx="9.9" cy="16" rx="7.6" ry="3.1" fill="#3a3d41" stroke="#66696d" stroke-width="0.6"/><ellipse cx="10.2" cy="15.6" rx="5.8" ry="1.9" fill="#4a4d51"/></svg>
<div class="a pb" style="left:389.70px;top:124.20px;width:11.60px;height:11.60px;"></div>
<svg style="left:394.20px;top:128.20px" width="4" height="4" viewBox="0 0 4 4" ><path d="M0 0 L3.1 1.8 L0 3.6Z" fill="#1a1a1a"/></svg>
<div class="a lb" style="left:350.00px;top:147.80px;width:54px"><svg style="position:relative;display:inline-block;vertical-align:-2px;margin-right:1.2px" width="8" height="8.6" viewBox="0 0 7 7.5"><path d="M3.5 0.3 L6.7 2 L6.7 5.5 L3.5 7.2 L0.3 5.5 L0.3 2Z" fill="#141414"/><path d="M3.5 1 L6 2.3 L3.5 3.6 L1 2.3Z" fill="#8fd0f0"/><path d="M1 2.5 L3.3 3.8 L3.3 6.5 L1 5.2Z" fill="#e6e6e6"/><path d="M3.7 3.8 L6 2.5 L6 5.2 L3.7 6.5Z" fill="#5ab8ea"/></svg>Kitchen...</div>
<div class="a th" style="left:406.60px;top:112.80px;width:34.00px;height:34.00px;"></div>
<svg style="left:406.60px;top:112.80px" width="34" height="34" viewBox="0 0 34 34" ><path d="M4.1 14.5 L29.2 19.9" stroke="#686d72" stroke-width="1" stroke-linecap="round"/></svg>
<div class="a pb" style="left:436.30px;top:124.20px;width:11.60px;height:11.60px;"></div>
<svg style="left:440.80px;top:128.20px" width="4" height="4" viewBox="0 0 4 4" ><path d="M0 0 L3.1 1.8 L0 3.6Z" fill="#1a1a1a"/></svg>
<div class="a lb" style="left:396.60px;top:147.80px;width:54px"><svg style="position:relative;display:inline-block;vertical-align:-2px;margin-right:1.2px" width="8" height="8.6" viewBox="0 0 7 7.5"><path d="M3.5 0.3 L6.7 2 L6.7 5.5 L3.5 7.2 L0.3 5.5 L0.3 2Z" fill="#141414"/><path d="M3.5 1 L6 2.3 L3.5 3.6 L1 2.3Z" fill="#8fd0f0"/><path d="M1 2.5 L3.3 3.8 L3.3 6.5 L1 5.2Z" fill="#e6e6e6"/><path d="M3.7 3.8 L6 2.5 L6 5.2 L3.7 6.5Z" fill="#5ab8ea"/></svg>Knife</div>
<div class="a th" style="left:452.60px;top:112.80px;width:34.00px;height:34.00px;"></div>
<svg style="left:452.60px;top:112.80px" width="34" height="34" viewBox="0 0 34 34" ><rect x="16.2" y="16" width="2.5" height="11.2" fill="#3f4246"/><polygon points="7.4,10.9 10.8,7.5 18.2,6.1 24.4,10.2 25,14.3 19.6,17 11.4,16.3 8.1,15" fill="#4b4e52" stroke="#66696d" stroke-width="0.6" stroke-linejoin="round"/><polygon points="7.4,10.9 10.8,7.5 18.2,6.1 14,11.5" fill="#55585c"/></svg>
<div class="a pb" style="left:482.30px;top:124.20px;width:11.60px;height:11.60px;"></div>
<svg style="left:486.80px;top:128.20px" width="4" height="4" viewBox="0 0 4 4" ><path d="M0 0 L3.1 1.8 L0 3.6Z" fill="#1a1a1a"/></svg>
<div class="a lb" style="left:442.60px;top:147.80px;width:54px"><svg style="position:relative;display:inline-block;vertical-align:-2px;margin-right:1.2px" width="8" height="8.6" viewBox="0 0 7 7.5"><path d="M3.5 0.3 L6.7 2 L6.7 5.5 L3.5 7.2 L0.3 5.5 L0.3 2Z" fill="#141414"/><path d="M3.5 1 L6 2.3 L3.5 3.6 L1 2.3Z" fill="#8fd0f0"/><path d="M1 2.5 L3.3 3.8 L3.3 6.5 L1 5.2Z" fill="#e6e6e6"/><path d="M3.7 3.8 L6 2.5 L6 5.2 L3.7 6.5Z" fill="#5ab8ea"/></svg>Mushro...</div>
<div class="a th" style="left:499.00px;top:112.80px;width:34.00px;height:34.00px;"></div>
<svg style="left:499.00px;top:112.80px" width="34" height="34" viewBox="0 0 34 34" ><rect x="15.6" y="3.8" width="1.3" height="5" fill="#3c3f43"/><path d="M16.1 8.5 C13.5 8.5 13.2 14 11.5 18 C9 23.5 11 28.5 16.1 28.5 C21.5 28.5 23.5 23.5 21 18 C19.2 14 18.8 8.5 16.1 8.5Z" fill="#484b4f" stroke="#64676b" stroke-width="0.7"/></svg>
<div class="a pb" style="left:528.70px;top:124.20px;width:11.60px;height:11.60px;"></div>
<svg style="left:533.20px;top:128.20px" width="4" height="4" viewBox="0 0 4 4" ><path d="M0 0 L3.1 1.8 L0 3.6Z" fill="#1a1a1a"/></svg>
<div class="a lb" style="left:489.00px;top:147.80px;width:54px"><svg style="position:relative;display:inline-block;vertical-align:-2px;margin-right:1.2px" width="8" height="8.6" viewBox="0 0 7 7.5"><path d="M3.5 0.3 L6.7 2 L6.7 5.5 L3.5 7.2 L0.3 5.5 L0.3 2Z" fill="#141414"/><path d="M3.5 1 L6 2.3 L3.5 3.6 L1 2.3Z" fill="#8fd0f0"/><path d="M1 2.5 L3.3 3.8 L3.3 6.5 L1 5.2Z" fill="#e6e6e6"/><path d="M3.7 3.8 L6 2.5 L6 5.2 L3.7 6.5Z" fill="#5ab8ea"/></svg>Pear</div>
<div class="a th" style="left:545.00px;top:112.80px;width:34.00px;height:34.00px;"></div>
<svg style="left:545.00px;top:112.80px" width="34" height="34" viewBox="0 0 34 34" ><rect x="15.4" y="6.9" width="1.3" height="3.8" fill="#35383c"/><polygon points="7.7,14.8 10.9,10.9 21.9,10.9 25.1,14.8 23.5,20.4 15.2,27.1 10.1,20.4" fill="#4c4f53" stroke="#66696d" stroke-width="0.6" stroke-linejoin="round"/><polygon points="11,20.5 23.5,20 15.2,27.1" fill="#3e4145"/><polygon points="16,13 25.1,14.8 23.5,20.4 16,20.5" fill="#45484c"/></svg>
<div class="a pb" style="left:574.70px;top:124.20px;width:11.60px;height:11.60px;"></div>
<svg style="left:579.20px;top:128.20px" width="4" height="4" viewBox="0 0 4 4" ><path d="M0 0 L3.1 1.8 L0 3.6Z" fill="#1a1a1a"/></svg>
<div class="a lb" style="left:535.00px;top:147.80px;width:54px"><svg style="position:relative;display:inline-block;vertical-align:-2px;margin-right:1.2px" width="8" height="8.6" viewBox="0 0 7 7.5"><path d="M3.5 0.3 L6.7 2 L6.7 5.5 L3.5 7.2 L0.3 5.5 L0.3 2Z" fill="#141414"/><path d="M3.5 1 L6 2.3 L3.5 3.6 L1 2.3Z" fill="#8fd0f0"/><path d="M1 2.5 L3.3 3.8 L3.3 6.5 L1 5.2Z" fill="#e6e6e6"/><path d="M3.7 3.8 L6 2.5 L6 5.2 L3.7 6.5Z" fill="#5ab8ea"/></svg>Pepper</div>
<div class="a th" style="left:591.40px;top:112.80px;width:34.00px;height:34.00px;"></div>
<svg style="left:591.40px;top:112.80px" width="34" height="34" viewBox="0 0 34 34" ><ellipse cx="16.7" cy="17.2" rx="11.5" ry="3.2" fill="#4a4d51" stroke="#66696d" stroke-width="0.6"/></svg>
<div class="a pb" style="left:621.10px;top:124.20px;width:11.60px;height:11.60px;"></div>
<svg style="left:625.60px;top:128.20px" width="4" height="4" viewBox="0 0 4 4" ><path d="M0 0 L3.1 1.8 L0 3.6Z" fill="#1a1a1a"/></svg>
<div class="a lb" style="left:581.40px;top:147.80px;width:54px"><svg style="position:relative;display:inline-block;vertical-align:-2px;margin-right:1.2px" width="8" height="8.6" viewBox="0 0 7 7.5"><path d="M3.5 0.3 L6.7 2 L6.7 5.5 L3.5 7.2 L0.3 5.5 L0.3 2Z" fill="#141414"/><path d="M3.5 1 L6 2.3 L3.5 3.6 L1 2.3Z" fill="#8fd0f0"/><path d="M1 2.5 L3.3 3.8 L3.3 6.5 L1 5.2Z" fill="#e6e6e6"/><path d="M3.7 3.8 L6 2.5 L6 5.2 L3.7 6.5Z" fill="#5ab8ea"/></svg>Plate_01</div>
<div class="a th" style="left:128.00px;top:165.00px;width:34.00px;height:34.00px;"></div>
<svg style="left:128.00px;top:165.00px" width="34" height="34" viewBox="0 0 34 34" ><ellipse cx="17" cy="16.3" rx="11.5" ry="3.5" fill="#4a4d51" stroke="#66696d" stroke-width="0.6" transform="rotate(5 17 16.3)"/><ellipse cx="11" cy="16" rx="5" ry="2.5" fill="#3e4145"/></svg>
<div class="a pb" style="left:157.70px;top:176.40px;width:11.60px;height:11.60px;"></div>
<svg style="left:162.20px;top:180.40px" width="4" height="4" viewBox="0 0 4 4" ><path d="M0 0 L3.1 1.8 L0 3.6Z" fill="#1a1a1a"/></svg>
<div class="a lb" style="left:118.00px;top:200.00px;width:54px"><svg style="position:relative;display:inline-block;vertical-align:-2px;margin-right:1.2px" width="8" height="8.6" viewBox="0 0 7 7.5"><path d="M3.5 0.3 L6.7 2 L6.7 5.5 L3.5 7.2 L0.3 5.5 L0.3 2Z" fill="#141414"/><path d="M3.5 1 L6 2.3 L3.5 3.6 L1 2.3Z" fill="#8fd0f0"/><path d="M1 2.5 L3.3 3.8 L3.3 6.5 L1 5.2Z" fill="#e6e6e6"/><path d="M3.7 3.8 L6 2.5 L6 5.2 L3.7 6.5Z" fill="#5ab8ea"/></svg>Plate_02</div>
<div class="a th" style="left:175.00px;top:165.00px;width:34.00px;height:34.00px;"></div>
<svg style="left:175.00px;top:165.00px" width="34" height="34" viewBox="0 0 34 34" ><ellipse cx="16.7" cy="17.7" rx="10" ry="8.1" fill="#4a4d51" stroke="#66696d" stroke-width="0.6"/><polygon points="8,20 25,20 21,25 12,25.5" fill="#3e4145"/></svg>
<div class="a pb" style="left:204.70px;top:176.40px;width:11.60px;height:11.60px;"></div>
<svg style="left:209.20px;top:180.40px" width="4" height="4" viewBox="0 0 4 4" ><path d="M0 0 L3.1 1.8 L0 3.6Z" fill="#1a1a1a"/></svg>
<div class="a lb" style="left:165.00px;top:200.00px;width:54px"><svg style="position:relative;display:inline-block;vertical-align:-2px;margin-right:1.2px" width="8" height="8.6" viewBox="0 0 7 7.5"><path d="M3.5 0.3 L6.7 2 L6.7 5.5 L3.5 7.2 L0.3 5.5 L0.3 2Z" fill="#141414"/><path d="M3.5 1 L6 2.3 L3.5 3.6 L1 2.3Z" fill="#8fd0f0"/><path d="M1 2.5 L3.3 3.8 L3.3 6.5 L1 5.2Z" fill="#e6e6e6"/><path d="M3.7 3.8 L6 2.5 L6 5.2 L3.7 6.5Z" fill="#5ab8ea"/></svg>Pumpkin</div>
<div class="a th" style="left:221.00px;top:165.00px;width:34.00px;height:34.00px;"></div>
<svg style="left:221.00px;top:165.00px" width="34" height="34" viewBox="0 0 34 34" ><rect x="15.9" y="3" width="2" height="9" fill="#44474b"/><polygon points="10.8,14.5 23,14.5 20.4,30.3 13.2,30.3" fill="#4a4d51" stroke="#66696d" stroke-width="0.6" stroke-linejoin="round"/><polygon points="17,14.5 23,14.5 20.4,30.3 17,30.3" fill="#3e4145"/><ellipse cx="17" cy="13.3" rx="7" ry="2.8" fill="#4a4d51" stroke="#66696d" stroke-width="0.6"/></svg>
<div class="a pb" style="left:250.70px;top:176.40px;width:11.60px;height:11.60px;"></div>
<svg style="left:255.20px;top:180.40px" width="4" height="4" viewBox="0 0 4 4" ><path d="M0 0 L3.1 1.8 L0 3.6Z" fill="#1a1a1a"/></svg>
<div class="a lb" style="left:211.00px;top:200.00px;width:54px"><svg style="position:relative;display:inline-block;vertical-align:-2px;margin-right:1.2px" width="8" height="8.6" viewBox="0 0 7 7.5"><path d="M3.5 0.3 L6.7 2 L6.7 5.5 L3.5 7.2 L0.3 5.5 L0.3 2Z" fill="#141414"/><path d="M3.5 1 L6 2.3 L3.5 3.6 L1 2.3Z" fill="#8fd0f0"/><path d="M1 2.5 L3.3 3.8 L3.3 6.5 L1 5.2Z" fill="#e6e6e6"/><path d="M3.7 3.8 L6 2.5 L6 5.2 L3.7 6.5Z" fill="#5ab8ea"/></svg>Soda</div>
<div class="a th" style="left:267.00px;top:165.00px;width:34.00px;height:34.00px;"></div>
<svg style="left:267.00px;top:165.00px" width="34" height="34" viewBox="0 0 34 34" ><path d="M3.9 17 C4 13 12 12.5 17 13.5 C20 14.5 22 16 25 17 C30 18 29.5 21.5 24 21.5 C16 21.5 4 21 3.9 17Z" fill="#5a5d61" stroke="#44474b" stroke-width="0.8"/></svg>
<div class="a pb" style="left:296.70px;top:176.40px;width:11.60px;height:11.60px;"></div>
<svg style="left:301.20px;top:180.40px" width="4" height="4" viewBox="0 0 4 4" ><path d="M0 0 L3.1 1.8 L0 3.6Z" fill="#1a1a1a"/></svg>
<div class="a lb" style="left:257.00px;top:200.00px;width:54px"><svg style="position:relative;display:inline-block;vertical-align:-2px;margin-right:1.2px" width="8" height="8.6" viewBox="0 0 7 7.5"><path d="M3.5 0.3 L6.7 2 L6.7 5.5 L3.5 7.2 L0.3 5.5 L0.3 2Z" fill="#141414"/><path d="M3.5 1 L6 2.3 L3.5 3.6 L1 2.3Z" fill="#8fd0f0"/><path d="M1 2.5 L3.3 3.8 L3.3 6.5 L1 5.2Z" fill="#e6e6e6"/><path d="M3.7 3.8 L6 2.5 L6 5.2 L3.7 6.5Z" fill="#5ab8ea"/></svg>Steak</div>
<div class="a th" style="left:313.50px;top:165.00px;width:34.00px;height:34.00px;"></div>
<svg style="left:313.50px;top:165.00px" width="34" height="34" viewBox="0 0 34 34" ><rect x="15.8" y="7.3" width="1.2" height="4.4" fill="#3e4145"/><polygon points="7.3,14 10.1,10.9 22.7,10.9 25.1,14 25.1,20.4 21.9,24.3 13.2,25.9 7.3,19.6" fill="#4a4d51" stroke="#66696d" stroke-width="0.6" stroke-linejoin="round"/><polygon points="8.5,22 24.5,21 21.9,24.3 13.2,25.9" fill="#35383c"/></svg>
<div class="a pb" style="left:343.20px;top:176.40px;width:11.60px;height:11.60px;"></div>
<svg style="left:347.70px;top:180.40px" width="4" height="4" viewBox="0 0 4 4" ><path d="M0 0 L3.1 1.8 L0 3.6Z" fill="#1a1a1a"/></svg>
<div class="a lb" style="left:303.50px;top:200.00px;width:54px"><svg style="position:relative;display:inline-block;vertical-align:-2px;margin-right:1.2px" width="8" height="8.6" viewBox="0 0 7 7.5"><path d="M3.5 0.3 L6.7 2 L6.7 5.5 L3.5 7.2 L0.3 5.5 L0.3 2Z" fill="#141414"/><path d="M3.5 1 L6 2.3 L3.5 3.6 L1 2.3Z" fill="#8fd0f0"/><path d="M1 2.5 L3.3 3.8 L3.3 6.5 L1 5.2Z" fill="#e6e6e6"/><path d="M3.7 3.8 L6 2.5 L6 5.2 L3.7 6.5Z" fill="#5ab8ea"/></svg>Tomato</div>
<div class="a th" style="left:360.00px;top:165.00px;width:34.00px;height:34.00px;"></div>
<svg style="left:360.00px;top:165.00px" width="34" height="34" viewBox="0 0 34 34" ><polygon points="8.1,10.9 12.4,6.5 18.8,6.1 24.3,10.1 24.7,17.2 22.7,24.3 14.8,27.5 9.3,22.7 7.3,16.4" fill="#4a4d51" stroke="#66696d" stroke-width="0.6" stroke-linejoin="round"/><polygon points="14,22 24.7,13 22.7,24.3 14.8,27.5" fill="#35383c"/></svg>
<div class="a pb" style="left:389.70px;top:176.40px;width:11.60px;height:11.60px;"></div>
<svg style="left:394.20px;top:180.40px" width="4" height="4" viewBox="0 0 4 4" ><path d="M0 0 L3.1 1.8 L0 3.6Z" fill="#1a1a1a"/></svg>
<div class="a lb" style="left:350.00px;top:200.00px;width:54px"><svg style="position:relative;display:inline-block;vertical-align:-2px;margin-right:1.2px" width="8" height="8.6" viewBox="0 0 7 7.5"><path d="M3.5 0.3 L6.7 2 L6.7 5.5 L3.5 7.2 L0.3 5.5 L0.3 2Z" fill="#141414"/><path d="M3.5 1 L6 2.3 L3.5 3.6 L1 2.3Z" fill="#8fd0f0"/><path d="M1 2.5 L3.3 3.8 L3.3 6.5 L1 5.2Z" fill="#e6e6e6"/><path d="M3.7 3.8 L6 2.5 L6 5.2 L3.7 6.5Z" fill="#5ab8ea"/></svg>Waterm...</div>
<div class="a" style="left:117.00px;top:380.00px;width:520.00px;height:12.00px;background:#3a3a3a"></div>
<svg style="left:119.00px;top:382.00px" width="7" height="8" viewBox="0 0 7 8" ><path d="M3.5 0.3 L6.7 2 L6.7 5.5 L3.5 7.2 L0.3 5.5 L0.3 2Z" fill="#141414"/><path d="M3.5 1 L6 2.3 L3.5 3.6 L1 2.3Z" fill="#8fd0f0"/><path d="M1 2.5 L3.3 3.8 L3.3 6.5 L1 5.2Z" fill="#e6e6e6"/><path d="M3.7 3.8 L6 2.5 L6 5.2 L3.7 6.5Z" fill="#5ab8ea"/></svg>
<div class="a t" style="left:128.20px;top:382.30px;font-size:7.1px;line-height:9px">Assets/Environment/Models/Flowers_01.fbx</div>
<div class="a" style="left:597.00px;top:386.00px;width:32.00px;height:1.00px;background:#5a5a5a"></div>
<div class="a" style="left:612.50px;top:383.50px;width:6.00px;height:6.00px;background:#a8a8a8;border-radius:50%"></div>
</div>
<div class="a" id="hl"></div>
</body></html>
